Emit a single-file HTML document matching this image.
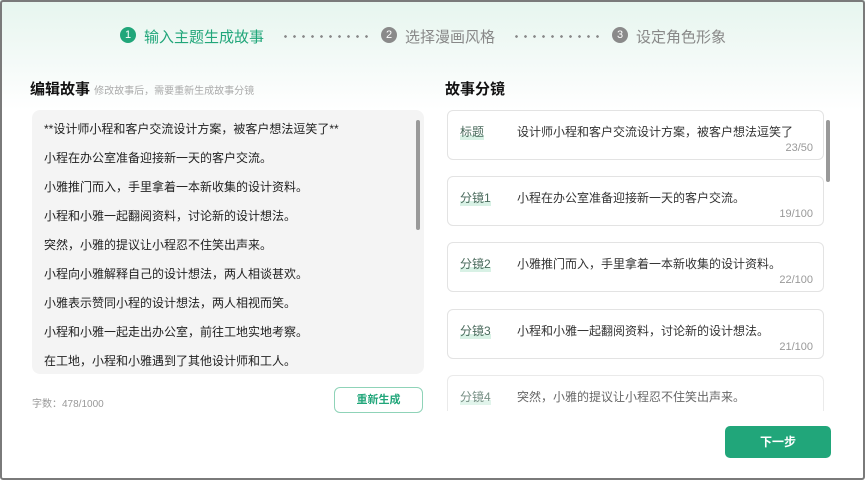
<!DOCTYPE html>
<html><head><meta charset="utf-8"><style>
*{margin:0;padding:0;box-sizing:border-box}
body{width:865px;height:480px;overflow:hidden;font-family:"Liberation Sans","Noto Sans CJK SC",sans-serif;background:#fff}
.win{position:absolute;left:0;top:0;width:865px;height:480px;background:linear-gradient(#e6f5ee 0px,#f6fbf9 70px,#fff 110px);overflow:hidden}
.frame{position:absolute;left:0;top:0;width:865px;height:480px;border:2px solid #7a7a7a;border-radius:3px;pointer-events:none}
.a{position:absolute;white-space:nowrap}
.circ{position:absolute;width:16px;height:16px;border-radius:50%;color:#fff;font-size:11px;text-align:center;line-height:16px}
.step{font-size:15px;top:26px}
.dots{position:absolute;top:35px;height:3px;background:radial-gradient(circle,#888 1.2px,transparent 1.5px) 0 0/9px 3px repeat-x}
.ta{position:absolute;left:32px;top:110px;width:392px;height:264px;background:#f4f4f4;border-radius:8px}
.ln{position:absolute;left:12px;font-size:12px;color:#222}
.card{position:absolute;left:447px;width:377px;height:50px;border:1px solid #e3e3e3;border-radius:6px;background:#fff}
.lab{position:absolute;left:12px;top:12px;font-size:12px;color:#4a6a5c;background:linear-gradient(transparent 70%,#d8f1e5 70%)}
.txt{position:absolute;left:69px;top:12px;font-size:12px;color:#333}
.cnt{position:absolute;right:10px;top:31px;font-size:11px;color:#999}
</style></head><body><div class="win">
<div class="circ" style="left:120px;top:27px;background:#21a67a">1</div>
<div class="a step" style="left:144px;color:#21a67a">输入主题生成故事</div>
<div class="dots" style="left:281px;width:90px"></div>
<div class="circ" style="left:381px;top:27px;background:#8a8a8a">2</div>
<div class="a step" style="left:405px;color:#888">选择漫画风格</div>
<div class="dots" style="left:512px;width:90px"></div>
<div class="circ" style="left:612px;top:27px;background:#8a8a8a">3</div>
<div class="a step" style="left:636px;color:#888">设定角色形象</div>

<div class="a" style="left:30px;top:78px;font-size:15px;font-weight:bold;color:#111">编辑故事 <span style="font-size:10px;font-weight:normal;color:#aaa">修改故事后，需要重新生成故事分镜</span></div>
<div class="a" style="left:445px;top:78px;font-size:15px;font-weight:bold;color:#111">故事分镜</div>

<div class="ta">
<div class="ln" style="top:10px">**设计师小程和客户交流设计方案，被客户想法逗笑了**</div>
<div class="ln" style="top:39px">小程在办公室准备迎接新一天的客户交流。</div>
<div class="ln" style="top:68px">小雅推门而入，手里拿着一本新收集的设计资料。</div>
<div class="ln" style="top:97px">小程和小雅一起翻阅资料，讨论新的设计想法。</div>
<div class="ln" style="top:126px">突然，小雅的提议让小程忍不住笑出声来。</div>
<div class="ln" style="top:155px">小程向小雅解释自己的设计想法，两人相谈甚欢。</div>
<div class="ln" style="top:184px">小雅表示赞同小程的设计想法，两人相视而笑。</div>
<div class="ln" style="top:213px">小程和小雅一起走出办公室，前往工地实地考察。</div>
<div class="ln" style="top:242px">在工地，小程和小雅遇到了其他设计师和工人。</div>
<div style="position:absolute;left:384px;top:10px;width:4px;height:110px;background:#999;border-radius:2px"></div>
</div>
<div class="a" style="left:32px;top:395px;font-size:10px;color:#999">字数：478/1000</div>
<div class="a" style="left:334px;top:387px;width:89px;height:26px;border:1px solid #8fd3b8;border-radius:6px;background:#fff;color:#21a67a;font-size:11px;font-weight:bold;text-align:center;line-height:24px">重新生成</div>

<div class="card" style="top:110px"><span class="lab">标题</span><span class="txt">设计师小程和客户交流设计方案，被客户想法逗笑了</span><span class="cnt">23/50</span></div>
<div class="card" style="top:176px"><span class="lab">分镜1</span><span class="txt">小程在办公室准备迎接新一天的客户交流。</span><span class="cnt">19/100</span></div>
<div class="card" style="top:242px"><span class="lab">分镜2</span><span class="txt">小雅推门而入，手里拿着一本新收集的设计资料。</span><span class="cnt">22/100</span></div>
<div class="card" style="top:309px"><span class="lab">分镜3</span><span class="txt">小程和小雅一起翻阅资料，讨论新的设计想法。</span><span class="cnt">21/100</span></div>
<div class="card" style="top:375px;height:36px;border-bottom:none;border-radius:6px 6px 0 0;opacity:.75"><span class="lab">分镜4</span><span class="txt">突然，小雅的提议让小程忍不住笑出声来。</span></div>
<div style="position:absolute;left:826px;top:120px;width:4px;height:62px;background:#999;border-radius:2px"></div>

<div class="a" style="left:725px;top:426px;width:106px;height:32px;background:#21a67a;border-radius:5px;color:#fff;font-size:12px;font-weight:bold;text-align:center;line-height:32px">下一步</div>
</div><div class="frame"></div></body></html>
